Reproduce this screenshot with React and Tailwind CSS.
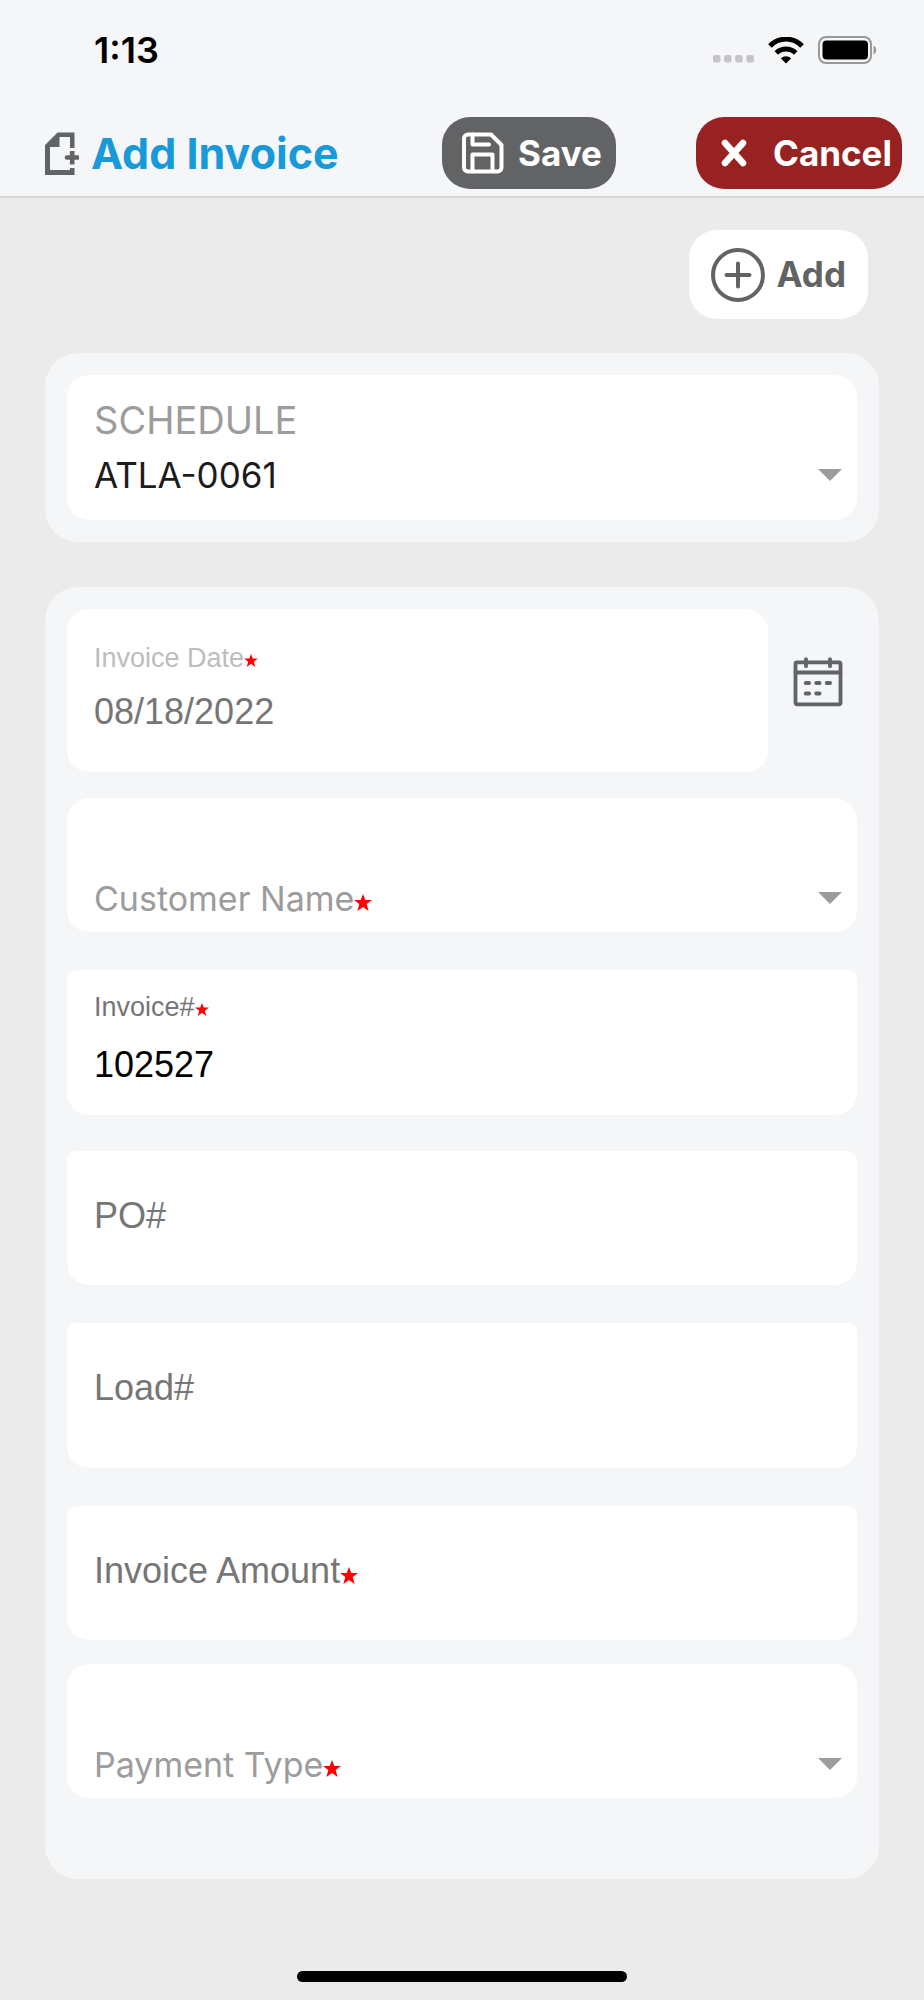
import React, { useState } from "react";

const sans = "font-['Liberation_Sans',Arial,sans-serif]";

const Star = ({ small }) => (
    <svg
        viewBox="0 0 18 17"
        aria-hidden="true"
        className={small ? "h-[13px] w-[14px] text-[#ff0000]" : "h-[17px] w-[18px] text-[#ff0000]"}
    >
        <path
            fill="currentColor"
            d="M9 0l2.3 6H18l-5.3 4.1L14.6 17 9 12.9 3.4 17l1.9-6.9L0 6h6.7z"
        />
    </svg>
);

const Caret = () => (
    <svg viewBox="0 0 24 12" aria-hidden="true" className="h-3 w-6 shrink-0">
        <path fill="#9c9c9c" d="M0 0h24L12 12z" />
    </svg>
);

const InvoiceIcon = () => (
    <svg viewBox="0 0 34 43" aria-hidden="true" className="h-[43px] w-[34px] shrink-0 text-[#626365]">
        <path
            fill="currentColor"
            d="M0 13L12.500 0.500H29.500V16H25V5H14.500V15H5V38H25V36H29.500V43H0z"
        />
        <path stroke="currentColor" strokeWidth="4.600" strokeLinecap="round" d="M22 25.500H32.500" />
        <path stroke="currentColor" strokeWidth="4.600" d="M27.200 19V32.500" />
    </svg>
);

const SaveIcon = () => (
    <svg
        viewBox="0 0 42 42"
        aria-hidden="true"
        className="h-[42px] w-[42px] shrink-0"
        fill="none"
        stroke="currentColor"
        strokeWidth="4"
        strokeLinecap="round"
        strokeLinejoin="round"
    >
        <path d="M6 2.500H29L39.500 13V35.500a4 4 0 0 1-4 4H6a4 4 0 0 1-4-4V6.500a4 4 0 0 1 4-4z" />
        <path d="M10.500 2.500V12.500H27" />
        <path d="M10.500 39V22.500H30.500V39" />
    </svg>
);

const CancelIcon = () => (
    <svg
        viewBox="0 0 26 28"
        aria-hidden="true"
        className="h-7 w-[26px] shrink-0"
        stroke="currentColor"
        strokeWidth="6.500"
        strokeLinecap="round"
    >
        <path d="M4 4l18 20M22 4L4 24" />
    </svg>
);

const PlusIcon = () => (
    <svg
        viewBox="0 0 54 54"
        aria-hidden="true"
        className="h-[54px] w-[54px] shrink-0"
        fill="none"
        stroke="currentColor"
        strokeWidth="4"
        strokeLinecap="round"
    >
        <circle cx="27" cy="27" r="25" />
        <path d="M15.500 27h23M27 15.500v23" />
    </svg>
);

const CalendarIcon = () => (
    <svg
        viewBox="0 0 50 50"
        aria-hidden="true"
        className="h-[50px] w-[50px]"
        fill="none"
        stroke="currentColor"
        strokeWidth="3.800"
        strokeLinecap="round"
        strokeLinejoin="round"
    >
        <rect x="2.500" y="5.300" width="45" height="42" rx="1.500" />
        <path d="M2.500 15.500h45M13 2.200v7M37 2.200v7" />
        <path d="M12.700 26h3.400M23.200 26h3.400M33.700 26h3.400M12.700 36.500h3.400M23.200 36.500h3.400" />
    </svg>
);

const StatusIcons = () => (
    <div className="flex items-center">
        <svg viewBox="0 0 42 8" aria-hidden="true" className="mt-[18px] h-2 w-[42px]" fill="#c5c5c8">
            <rect x="0" width="7.500" height="7.500" rx="2" />
            <rect x="11" width="7.500" height="7.500" rx="2" />
            <rect x="22.200" width="7.500" height="7.500" rx="2" />
            <rect x="33.400" width="7.500" height="7.500" rx="2" />
        </svg>
        <svg viewBox="0 0 36 27" aria-hidden="true" className="ml-[13px] h-[27px] w-9">
            <path d="M2 9A22 22 0 0 1 34 9" fill="none" stroke="#000" strokeWidth="5" />
            <path d="M8.300 16A14 14 0 0 1 27.700 16" fill="none" stroke="#000" strokeWidth="5" />
            <path d="M12.800 21.300a7.500 7.500 0 0 1 10.400 0L18 26.500z" fill="#000" />
        </svg>
        <svg viewBox="0 0 60 28" aria-hidden="true" className="ml-[14px] h-7 w-[60px]">
            <rect x="1" y="1" width="52" height="26" rx="7" fill="none" stroke="#98999b" strokeWidth="2" />
            <rect x="4.500" y="4.500" width="45.500" height="19" rx="4" fill="#000" />
            <path d="M55.500 9.500a5 5 0 0 1 0 9z" fill="#98999b" />
        </svg>
    </div>
);

const DropField = ({ id, label }) => (
    <div className="relative flex h-[134px] items-center rounded-[22px] bg-white pr-[15px] pl-[27px] pt-[66px]">
        <label htmlFor={id} className="flex flex-1 items-center text-[34px] text-[#9c9c9c]">
            {label}
            <span className="mt-2">
                <Star />
            </span>
        </label>
        <Caret />
        <select id={id} className="absolute inset-0 appearance-none rounded-[22px] text-transparent">
            <option value=""></option>
        </select>
    </div>
);

const EmptyField = ({ id, label, required, tall }) => (
    <div
        className={`relative rounded-t-[9px] rounded-b-[22px] bg-white px-[27px] pt-[41px] ${sans} ${
            tall ? "h-[145px]" : "h-[134px]"
        }`}
    >
        <label htmlFor={id} className="flex items-center text-4xl leading-[48px] text-[#767676]">
            {label}
            {required && (
                <span className="mt-2">
                    <Star />
                </span>
            )}
        </label>
        <input id={id} type="text" className="absolute inset-0 w-full bg-transparent px-[27px] text-4xl outline-none" />
    </div>
);

const App = () => {
    const [date, setDate] = useState("08/18/2022");
    const [invoice, setInvoice] = useState("102527");

    return (
        <div className="flex min-h-screen flex-col bg-[#ebebeb] font-['Inter',sans-serif]">
            <header className="border-b-2 border-[#d6d7d9] bg-[#f5f6f8] pb-[7px]">
                <div className="flex h-[100px] items-center justify-between pr-[46px] pl-[94px]">
                    <span className="text-[36px] font-semibold text-black">1:13</span>
                    <StatusIcons />
                </div>
                <div className="mt-[17px] flex items-center gap-20 pr-[22px] pl-[45px]">
                    <div className="flex flex-1 items-center gap-3">
                        <InvoiceIcon />
                        <h1 className="text-[43px] font-bold whitespace-nowrap text-[#189ad8]">Add Invoice</h1>
                    </div>
                    <button
                        type="button"
                        className="flex h-[72px] w-[174px] items-center gap-[14px] rounded-[28px] bg-[#626365] pl-5 text-[35px] font-bold text-white"
                    >
                        <SaveIcon />
                        Save
                    </button>
                    <button
                        type="button"
                        className="flex h-[72px] w-[206px] items-center gap-[26px] rounded-[28px] bg-[#982222] pl-[25px] text-[35px] font-bold text-white"
                    >
                        <CancelIcon />
                        Cancel
                    </button>
                </div>
            </header>

            <main className="px-[45px] pt-8">
                <div className="flex justify-end pr-[11px]">
                    <button
                        type="button"
                        className="flex h-[89px] items-center gap-3 rounded-[28px] bg-white px-[22px] text-[35px] font-bold text-[#626365]"
                    >
                        <PlusIcon />
                        Add
                    </button>
                </div>

                <section className="mt-[34px] rounded-[33px] bg-[#f4f6f8] p-[22px]">
                    <div className="relative h-[145px] rounded-[22px] bg-white pt-5 pr-[15px] pl-[27px]">
                        <label htmlFor="schedule" className="block text-[38px] leading-[50px] text-[#9c9c9c]">
                            SCHEDULE
                        </label>
                        <div className="mt-[5px] flex items-center">
                            <select
                                id="schedule"
                                className="h-[50px] flex-1 appearance-none text-[35px] leading-[50px] text-[#1c1c1c]"
                            >
                                <option>ATLA-0061</option>
                            </select>
                            <Caret />
                        </div>
                    </div>
                </section>

                <section className="mt-[45px] rounded-[33px] bg-[#f4f6f8] p-[22px] pb-[81px]">
                    <div className="flex">
                        <div className={`h-[163px] flex-1 rounded-[22px] bg-white px-[27px] pt-8 ${sans}`}>
                            <label
                                htmlFor="date"
                                className="flex items-center text-[27px] leading-[34px] text-[#bdbdbd]"
                            >
                                Invoice Date
                                <span className="mt-1">
                                    <Star small />
                                </span>
                            </label>
                            <input
                                id="date"
                                type="text"
                                value={date}
                                onChange={(e) => setDate(e.target.value)}
                                className="mt-[13px] h-12 w-full text-4xl text-[#767676] outline-none"
                            />
                        </div>
                        <button
                            type="button"
                            aria-label="Pick a date"
                            className="mt-12 mr-[14px] ml-[25px] self-start text-[#626365]"
                        >
                            <CalendarIcon />
                        </button>
                    </div>

                    <div className="mt-[26px]">
                        <DropField id="customer" label="Customer Name" />
                    </div>

                    <div className={`mt-[38px] h-[145px] rounded-t-[9px] rounded-b-[22px] bg-white px-[27px] pt-5 ${sans}`}>
                        <label htmlFor="invoice" className="flex items-center text-[27px] leading-[34px] text-[#767676]">
                            Invoice#
                            <span className="mt-1">
                                <Star small />
                            </span>
                        </label>
                        <input
                            id="invoice"
                            type="text"
                            value={invoice}
                            onChange={(e) => setInvoice(e.target.value)}
                            className="mt-[17px] h-12 w-full text-4xl text-black outline-none"
                        />
                    </div>

                    <div className="mt-9 space-y-[38px]">
                        <EmptyField id="po" label="PO#" />
                        <EmptyField id="load" label="Load#" tall />
                        <EmptyField id="amount" label="Invoice Amount" required />
                    </div>

                    <div className="mt-6">
                        <DropField id="payment" label="Payment Type" />
                    </div>
                </section>
            </main>

            <footer className="mt-auto flex justify-center pt-8 pb-[18px]">
                <div className="h-[11px] w-[330px] rounded-full bg-black"></div>
            </footer>
        </div>
    );
};

export default App;
